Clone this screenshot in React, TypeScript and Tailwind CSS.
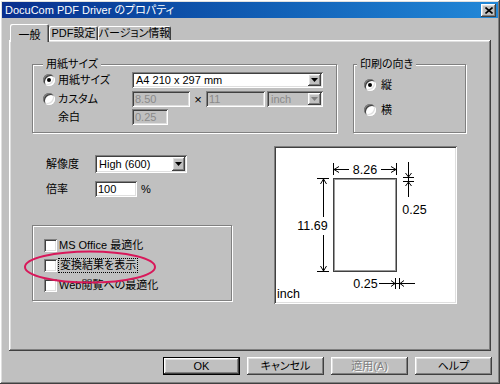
import type { ReactNode } from 'react';

const raised =
  'shadow-[inset_-1px_-1px_0_#404040,inset_1px_1px_0_#ffffff,inset_-2px_-2px_0_#808080,inset_2px_2px_0_#dfdfdf]';
const sunken =
  'shadow-[inset_1px_1px_0_#808080,inset_-1px_-1px_0_#ffffff,inset_2px_2px_0_#404040,inset_-2px_-2px_0_#dfdfdf]';

function Radio({ checked }: { checked?: boolean }) {
  return (
    <span className="w-[12px] h-[12px] shrink-0 rounded-full bg-white flex items-center justify-center shadow-[inset_1px_1px_0_#808080,inset_-1px_-1px_0_#ffffff,inset_2px_2px_0_#404040,inset_-2px_-2px_0_#dfdfdf]">
      {checked && <span className="w-[4px] h-[4px] rounded-full bg-black" />}
    </span>
  );
}

function Check() {
  return <span className={`w-[13px] h-[13px] shrink-0 bg-white ${sunken}`} />;
}

function Field({ value, className = '', disabled }: { value: string; className?: string; disabled?: boolean }) {
  return (
    <div
      className={`h-[16px] flex items-center px-[3px] leading-none ${sunken} ${
        disabled ? 'bg-[#c0c0c0] text-[#8a8a8a]' : 'bg-white text-black'
      } ${className}`}
    >
      {value}
    </div>
  );
}

function Combo({ value, className = '', disabled }: { value: string; className?: string; disabled?: boolean }) {
  return (
    <div className={`flex p-[2px] ${sunken} ${disabled ? 'bg-[#c0c0c0] text-[#8a8a8a]' : 'bg-white text-black'} ${className}`}>
      <span className="flex-1 flex items-center pl-[2px] leading-none">{value}</span>
      <span className={`w-[13px] h-full flex items-center justify-center bg-[#c0c0c0] ${raised}`}>
        <svg width="7" height="4" viewBox="0 0 7 4">
          <path d="M0 0h7L3.5 4z" fill={disabled ? '#808080' : '#000'} />
        </svg>
      </span>
    </div>
  );
}

function Group({
  label,
  labelClass = '',
  className = '',
  children,
}: {
  label?: string;
  labelClass?: string;
  className?: string;
  children: ReactNode;
}) {
  return (
    <div className={`relative border border-[#808080] shadow-[inset_1px_1px_0_#ffffff,1px_1px_0_#ffffff] ${className}`}>
      {label && (
        <span className={`absolute -top-[8px] bg-[#c0c0c0] leading-[14px] ${labelClass}`}>{label}</span>
      )}
      {children}
    </div>
  );
}

function Preview() {
  return (
    <div className={`relative ml-[42px] mt-[13px] w-[183px] h-[158px] bg-white ${sunken}`}>
      <svg
        className="absolute inset-0"
        width="183"
        height="158"
        viewBox="0 0 183 158"
        fontFamily="Liberation Sans, sans-serif"
        fontSize="12.5"
        fill="#000"
      >
        {/* page */}
        <rect x="59.5" y="32.5" width="63" height="93" fill="none" stroke="#404040" />
        <rect x="60.5" y="33.5" width="61" height="91" fill="none" stroke="#9a9a9a" />

        {/* width 8.26 */}
        <g stroke="#000" fill="none">
          <path d="M59.5 17v12M122.5 17v12" />
          <path d="M60 23.5h15M107 23.5h15" />
          <path d="M60 23.5l5 -3M60 23.5l5 3M122 23.5l-5 -3M122 23.5l-5 3" />
        </g>
        <text x="91" y="28" textAnchor="middle">8.26</text>

        {/* height 11.69 */}
        <g stroke="#000" fill="none">
          <path d="M43 32.5h12M43 125.5h12" />
          <path d="M49.5 33v38M49.5 89v36" />
          <path d="M49.5 33l-3 5M49.5 33l3 5M49.5 125l-3 -5M49.5 125l3 -5" />
        </g>
        <text x="38.5" y="84" textAnchor="middle">11.69</text>

        {/* top margin 0.25 */}
        <g stroke="#000" fill="none">
          <path d="M134.5 16v35" />
          <path d="M129 31.5h11M129 35.5h11" />
          <path d="M134.5 31l-3 -4M134.5 31l3 -4M134.5 36l-3 4M134.5 36l3 4" />
        </g>
        <text x="140.5" y="68" textAnchor="middle">0.25</text>

        {/* right margin 0.25 */}
        <g stroke="#000" fill="none">
          <path d="M105 137.5h36" />
          <path d="M121.5 132v11M125.5 132v11" />
          <path d="M121 137.5l-4 -3M121 137.5l-4 3M126 137.5l4 -3M126 137.5l4 3" />
        </g>
        <text x="91.5" y="142" textAnchor="middle">0.25</text>

        <text x="3" y="152">inch</text>
      </svg>
    </div>
  );
}

const buttons = [
  { label: 'OK', def: true },
  { label: 'キャンセル' },
  { label: '適用(A)', disabled: true },
  { label: 'ヘルプ' },
];

export default function App() {
  return (
    <div
      className={`w-[500px] h-[384px] overflow-hidden bg-[#c0c0c0] text-[11px] text-black font-['Liberation_Sans','Noto_Sans_CJK_JP',sans-serif] [font-feature-settings:'palt'] ${raised}`}
    >
      {/* title bar */}
      <div className="mx-[2px] mt-[2px] h-[16px] flex items-center justify-between pl-[3px] pr-[2px] bg-gradient-to-r from-[#0a2f8e] to-[#2288d8]">
        <span className="text-white leading-none">DocuCom PDF Driver のプロパティ</span>
        <span className={`w-[15px] h-[13px] flex items-center justify-center bg-[#c0c0c0] ${raised}`}>
          <svg width="8" height="7" viewBox="0 0 8 7">
            <path d="M0.5 0.5l7 6M7.5 0.5l-7 6" stroke="#000" strokeWidth="1.6" />
          </svg>
        </span>
      </div>

      {/* tabs */}
      <div className="mt-[6px] ml-[10px] h-[18px] -mb-[2px] flex items-end relative z-10">
        <div className="w-[39px] h-[18px] flex justify-center pt-[3px] bg-[#c0c0c0] rounded-t-[2px] shadow-[inset_1px_1px_0_#ffffff,inset_-1px_0_0_#404040,inset_-2px_0_0_#808080]">
          一般
        </div>
        <div className="w-[49px] h-[14px] mb-[2px] flex items-center justify-center rounded-t-[2px] shadow-[inset_1px_1px_0_#ffffff,inset_-1px_0_0_#404040,inset_-2px_0_0_#808080]">
          PDF設定
        </div>
        <div className="w-[73px] h-[14px] mb-[2px] flex items-center justify-center rounded-t-[2px] shadow-[inset_1px_1px_0_#ffffff,inset_-1px_0_0_#404040,inset_-2px_0_0_#808080]">
          バージョン情報
        </div>
      </div>

      {/* panel */}
      <div className={`ml-[9px] w-[482px] h-[311px] pl-[23px] pt-[24px] ${raised}`}>
        <div className="flex">
          <Group label="用紙サイズ" labelClass="left-[10px] px-[3px]" className="w-[305px] h-[69px] pt-[7px] pl-[10px]">
            <div className="h-[16px] flex items-center">
              <div className="w-[89px] flex items-center gap-[3px]">
                <Radio checked />
                <span>用紙サイズ</span>
              </div>
              <Combo value="A4 210 x 297 mm" className="w-[191px] h-[16px]" />
            </div>
            <div className="mt-[3px] h-[16px] flex items-center">
              <div className="w-[89px] flex items-center gap-[3px]">
                <Radio />
                <span>カスタム</span>
              </div>
              <Field value="8.50" disabled className="w-[58px]" />
              <span className="w-[16px] text-center text-[13px] leading-none">×</span>
              <Field value="11" disabled className="w-[59px]" />
              <Combo value="inch" disabled className="ml-[2px] w-[56px] h-[16px]" />
            </div>
            <div className="mt-[2px] h-[16px] flex items-center">
              <span className="w-[89px] pl-[15px]">余白</span>
              <Field value="0.25" disabled className="w-[36px]" />
            </div>
          </Group>

          <Group label="印刷の向き" labelClass="left-[3px] px-[3px]" className="ml-[16px] w-[113px] h-[69px] pt-[12px] pl-[10px]">
            <div className="h-[16px] flex items-center gap-[5px]">
              <Radio checked />
              <span>縦</span>
            </div>
            <div className="mt-[9px] h-[16px] flex items-center gap-[5px]">
              <Radio />
              <span>横</span>
            </div>
          </Group>
        </div>

        <div className="flex items-start">
          <div className="w-[200px]">
            <div className="mt-[22px] h-[18px] pl-[14px] flex items-center">
              <span className="w-[49px]">解像度</span>
              <Combo value="High (600)" className="w-[92px] h-[18px]" />
            </div>
            <div className="mt-[8px] h-[16px] pl-[14px] flex items-center">
              <span className="w-[49px]">倍率</span>
              <Field value="100" className="w-[42px]" />
              <span className="ml-[4px]">%</span>
            </div>

            <Group className="relative mt-[28px] h-[76px] w-full pt-[9px] pl-[11px]">
              <div className="h-[20px] flex items-center gap-[2px]">
                <Check />
                <span>MS Office 最適化</span>
              </div>
              <div className="h-[20px] flex items-center gap-[1px]">
                <Check />
                <span className="border border-dotted border-black px-[1px] leading-[13px]">変換結果を表示</span>
              </div>
              <div className="h-[20px] flex items-center gap-[2px]">
                <Check />
                <span>Web閲覧への最適化</span>
              </div>
              <svg className="absolute left-[-10px] top-[24px]" width="134" height="34" viewBox="0 0 134 34">
                <ellipse cx="67" cy="17" rx="65" ry="15.5" fill="none" stroke="#d8185a" strokeWidth="2" />
              </svg>
            </Group>
          </div>

          <Preview />
        </div>
      </div>

      {/* buttons */}
      <div className="mt-[6px] pr-[8px] flex justify-end gap-[7px]">
        {buttons.map((b) => (
          <button
            key={b.label}
            className={`w-[77px] h-[18px] flex items-center justify-center bg-[#c0c0c0] leading-none ${raised} ${
              b.def ? 'border border-black' : ''
            } ${b.disabled ? 'text-[#808080] [text-shadow:1px_1px_0_#ffffff]' : 'text-black'}`}
          >
            {b.label}
          </button>
        ))}
      </div>
    </div>
  );
}
